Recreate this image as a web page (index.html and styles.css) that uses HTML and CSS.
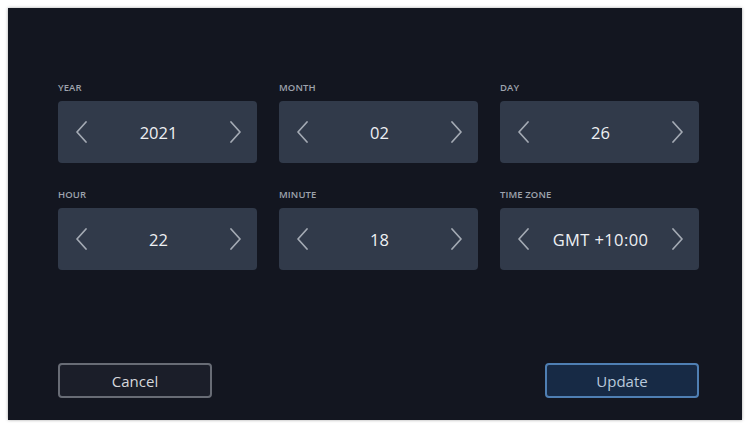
FILE: index.html
```html
<!DOCTYPE html>
<html>
<head>
<meta charset="utf-8">
<link rel="stylesheet" href="styles.css">
</head>
<body>
<div class="panel">
  <div class="grid">
    <div class="field">
      <div class="label">YEAR</div>
      <div class="spinner">
        <svg class="chev" viewBox="0 0 12 22"><path d="M11 1 L2 11 L11 21"/></svg>
        <span class="value">2021</span>
        <svg class="chev" viewBox="0 0 12 22"><path d="M1 1 L10 11 L1 21"/></svg>
      </div>
    </div>
    <div class="field">
      <div class="label">MONTH</div>
      <div class="spinner">
        <svg class="chev" viewBox="0 0 12 22"><path d="M11 1 L2 11 L11 21"/></svg>
        <span class="value">02</span>
        <svg class="chev" viewBox="0 0 12 22"><path d="M1 1 L10 11 L1 21"/></svg>
      </div>
    </div>
    <div class="field">
      <div class="label">DAY</div>
      <div class="spinner">
        <svg class="chev" viewBox="0 0 12 22"><path d="M11 1 L2 11 L11 21"/></svg>
        <span class="value">26</span>
        <svg class="chev" viewBox="0 0 12 22"><path d="M1 1 L10 11 L1 21"/></svg>
      </div>
    </div>
    <div class="field">
      <div class="label">HOUR</div>
      <div class="spinner">
        <svg class="chev" viewBox="0 0 12 22"><path d="M11 1 L2 11 L11 21"/></svg>
        <span class="value">22</span>
        <svg class="chev" viewBox="0 0 12 22"><path d="M1 1 L10 11 L1 21"/></svg>
      </div>
    </div>
    <div class="field">
      <div class="label">MINUTE</div>
      <div class="spinner">
        <svg class="chev" viewBox="0 0 12 22"><path d="M11 1 L2 11 L11 21"/></svg>
        <span class="value">18</span>
        <svg class="chev" viewBox="0 0 12 22"><path d="M1 1 L10 11 L1 21"/></svg>
      </div>
    </div>
    <div class="field">
      <div class="label">TIME ZONE</div>
      <div class="spinner">
        <svg class="chev" viewBox="0 0 12 22"><path d="M11 1 L2 11 L11 21"/></svg>
        <span class="value value-wide">GMT +10:00</span>
        <svg class="chev" viewBox="0 0 12 22"><path d="M1 1 L10 11 L1 21"/></svg>
      </div>
    </div>
  </div>
  <div class="actions">
    <button class="btn btn-cancel">Cancel</button>
    <button class="btn btn-update">Update</button>
  </div>
</div>
</body>
</html>
```
FILE: styles.css
```css
html, body {
  margin: 0;
  padding: 0;
  background: #ffffff;
}
body {
  padding: 8px 6px 3px 8px;
  font-family: "Open Sans", "Noto Sans", sans-serif;
}
.panel {
  box-sizing: border-box;
  width: 734px;
  height: 412px;
  background: #131620;
  box-shadow: 0 0 3px rgba(0,0,0,0.35);
  padding: 74px 43px 22px 50px;
  display: flex;
  flex-direction: column;
}
.grid {
  display: grid;
  grid-template-columns: 199px 199px 199px;
  column-gap: 22px;
  row-gap: 26px;
}
.field {
  display: flex;
  flex-direction: column;
}
.label {
  font-size: 9.5px;
  font-weight: 600;
  letter-spacing: 0.1px;
  color: #9ea3ad;
  line-height: 11px;
  height: 11px;
  margin-bottom: 8px;
}
.spinner {
  height: 62px;
  background: #313a4a;
  border-radius: 4px;
  display: flex;
  align-items: center;
  justify-content: space-between;
  padding: 0 15px 0 17px;
}
.chev {
  width: 12px;
  height: 22px;
  fill: none;
  stroke: #a4aab4;
  stroke-width: 1.7;
  stroke-linecap: round;
  stroke-linejoin: round;
}
.value {
  font-size: 16.5px;
  font-weight: 500;
  color: #eef0f3;
}
.value-wide {
  letter-spacing: 0.4px;
}
.actions {
  margin-top: auto;
  display: flex;
  justify-content: space-between;
}
.btn {
  width: 154px;
  height: 35px;
  border-radius: 4px;
  font-family: "Open Sans", "Noto Sans", sans-serif;
  font-size: 15px;
  font-weight: 500;
  box-sizing: border-box;
}
.btn-cancel {
  background: #1b1e29;
  border: 2px solid #686c75;
  color: #d6d8dc;
}
.btn-update {
  background: #172a45;
  border: 2px solid #4f7fb3;
  color: #b9c9dc;
}
```
